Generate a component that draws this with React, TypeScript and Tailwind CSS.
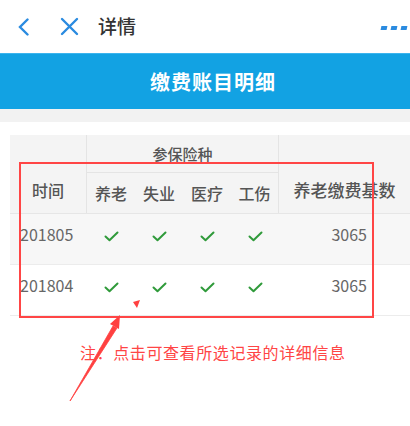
import React from 'react';

const font = { fontFamily: '"Noto Sans CJK SC", "Noto Sans", sans-serif' };

function Check() {
  return (
    <svg width="15" height="11" viewBox="0 0 15 11" fill="none">
      <path d="M1.5 5.5 L5.5 9.2 L13.5 1.5" stroke="#2f9a3a" strokeWidth="2" strokeLinecap="round" strokeLinejoin="round" />
    </svg>
  );
}

const rows = [
  { time: '201805', base: '3065', bg: 'bg-[#f7f7f7]' },
  { time: '201804', base: '3065', bg: 'bg-white' },
];

export default function App() {
  return (
    <div className="relative w-[410px] h-[426px] bg-white overflow-hidden" style={font}>
      {/* top nav */}
      <div className="h-[53px] flex items-center">
        <svg className="ml-[17px]" width="13" height="18" viewBox="0 0 13 18" fill="none">
          <path d="M10.5 1.5 L3 9 L10.5 16.5" stroke="#2a8be0" strokeWidth="2.4" strokeLinecap="round" />
        </svg>
        <svg className="ml-[30px]" width="19" height="19" viewBox="0 0 19 19" fill="none">
          <path d="M2 2 L17 17 M17 2 L2 17" stroke="#2a8be0" strokeWidth="2.4" strokeLinecap="round" />
        </svg>
        <span className="ml-[19px] text-[19px] text-[#333] font-medium leading-none mb-[2px]">详情</span>
        <div className="ml-auto mr-[3px] flex gap-[4px] mt-[2px]">
          <span className="w-[6px] h-[4px] bg-[#2a8be0] -skew-x-12" />
          <span className="w-[6px] h-[4px] bg-[#2a8be0] -skew-x-12" />
          <span className="w-[6px] h-[4px] bg-[#2a8be0] -skew-x-12" />
        </div>
      </div>

      {/* banner */}
      <div className="h-[56px] bg-[#12a2e3] border-t border-[#3bb4ee] flex items-center justify-center">
        <span className="text-white text-[20px] font-bold tracking-[1px] ml-[16px]">缴费账目明细</span>
      </div>
      <div className="h-[13px] bg-[#f2f2f2]" />
      <div className="h-[13px] bg-white" />

      {/* table */}
      <div className="ml-[10px] text-[#555]">
        <div className="grid grid-cols-[77px_48px_48px_48px_48px_131px] bg-[#f4f4f4] border-b border-[#e6e6e6]">
          <div className="row-span-2 border-r border-[#e4e4e4] flex items-end justify-center pb-[11px] text-[16px] font-medium">时间</div>
          <div className="col-span-4 h-[38px] border-b border-[#e4e4e4] border-r flex items-center justify-center text-[15px] font-medium pt-[2px]">参保险种</div>
          <div className="row-span-2 border-l border-[#e4e4e4] -ml-px flex items-end justify-center pb-[11px] text-[17px] font-medium">养老缴费基数</div>
          {['养老', '失业', '医疗', '工伤'].map((t, i) => (
            <div key={t} className={`h-[40px] flex items-center justify-center text-[16px] font-medium ${i === 3 ? 'border-r border-[#e4e4e4]' : ''}`}>
              {t}
            </div>
          ))}
        </div>
        {rows.map((r) => (
          <div key={r.time} className={`grid grid-cols-[77px_48px_48px_48px_48px_131px] h-[51px] border-b border-[#ececec] ${r.bg}`}>
            <div className="pl-[10px] pt-[8px] text-[16px] text-[#666]">{r.time}</div>
            {[0, 1, 2, 3].map((k) => (
              <div key={k} className="flex justify-center pt-[17px]">
                <Check />
              </div>
            ))}
            <div className="text-right pr-[43px] pt-[8px] text-[16px] text-[#666]">{r.base}</div>
          </div>
        ))}
      </div>

      {/* annotation */}
      <div className="absolute left-[19px] top-[162px] w-[355px] h-[156px] border-2 border-[#ff4545]" />
      <svg className="absolute left-0 top-0 pointer-events-none" width="410" height="426" viewBox="0 0 410 426">
        <path d="M70 401 L113 326 L117 328 Z" fill="#ff4040" stroke="#ff4040" strokeWidth="0.8" />
        <path d="M120 315 L110 324 L119 329 Z" fill="#ff4040" />
        <path d="M133 302 L140 300 L137 308 Z" fill="#ff4040" />
      </svg>
      <div className="absolute left-[80px] top-[340px] text-[16px] text-[#ff4545] leading-[24px] tracking-[0.6px]">注：点击可查看所选记录的详细信息</div>
    </div>
  );
}
